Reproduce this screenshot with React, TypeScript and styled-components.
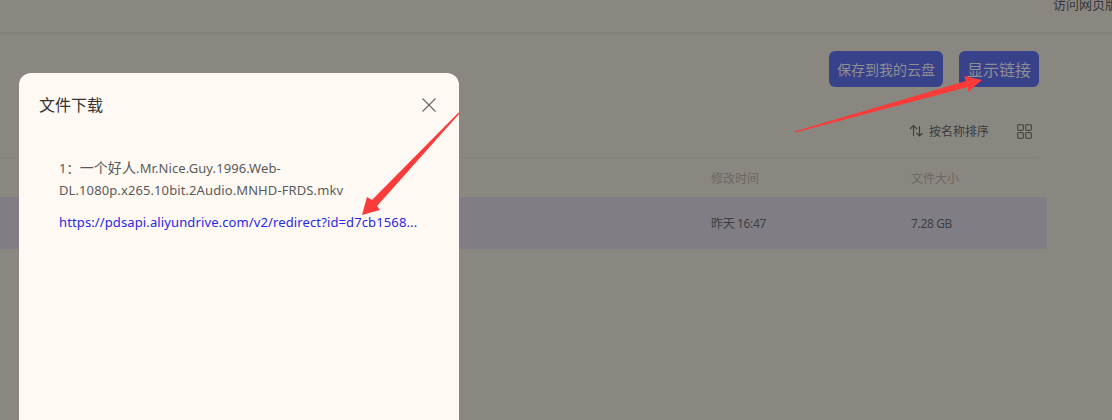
import React from "react";
import styled, { createGlobalStyle } from "styled-components";

const GlobalStyle = createGlobalStyle`
  html, body {
    margin: 0;
    padding: 0;
    background: #8a8780;
    overflow: hidden;
    font-family: "Noto Sans", "Noto Sans CJK SC", sans-serif;
  }
`;

const Page = styled.div`
  position: relative;
  width: 1112px;
  height: 420px;
  overflow: hidden;
  background: #8a8780;
`;

const TopBar = styled.div`
  height: 33px;
  box-sizing: border-box;
  border-bottom: 1px solid #84817a;
  box-shadow: 0 1px 3px rgba(100, 98, 92, 0.25);
  display: flex;
  justify-content: flex-end;
  overflow: hidden;
`;

const VisitLink = styled.span`
  flex: none;
  margin-right: -6px;
  margin-top: -5px;
  font-size: 13px;
  line-height: 18px;
  color: #36343a;
  white-space: nowrap;
`;

const Content = styled.div`
  display: flex;
  flex-direction: column;
  padding: 18px 65px 0 0;
`;

const Actions = styled.div`
  display: flex;
  justify-content: flex-end;
  gap: 16px;
  margin-right: 8px;
`;

const ActionButton = styled.button<{ $size: number }>`
  height: 36px;
  padding: 0 8px;
  border: 0;
  border-radius: 6px;
  background: #37428a;
  color: #8f8e93;
  font: inherit;
  font-size: ${(props) => props.$size}px;
  white-space: nowrap;
`;

const SortRow = styled.div`
  display: flex;
  align-items: center;
  justify-content: flex-end;
  height: 36px;
  margin-top: 26px;
  margin-right: 15px;
`;

const SortLabel = styled.span`
  margin-left: 5px;
  margin-right: 28px;
  font-size: 12px;
  color: #3b3a3a;
`;

const Divider = styled.div`
  height: 1px;
  margin-top: 8px;
  margin-right: 8px;
  background: #84817a;
`;

const TableRow = styled.div<{ $selected?: boolean }>`
  display: grid;
  grid-template-columns: 711px 200px 1fr;
  align-items: center;
  height: ${(props) => (props.$selected ? 52 : 39)}px;
  background: ${(props) => (props.$selected ? "#807e84" : "transparent")};
  color: ${(props) => (props.$selected ? "#3f3e41" : "#6b6865")};
  font-size: 12px;
  letter-spacing: ${(props) => (props.$selected ? "-0.35px" : "0")};
`;

const Cell = styled.span`
  white-space: nowrap;
`;

const Modal = styled.div`
  position: absolute;
  left: 19px;
  top: 73px;
  width: 440px;
  height: 360px;
  box-sizing: border-box;
  background: #fff9f3;
  border-radius: 12px;
  padding: 0 20px;
`;

const ModalHeader = styled.div`
  display: flex;
  align-items: center;
  justify-content: space-between;
  height: 63px;
  box-sizing: border-box;
`;

const ModalTitle = styled.h2`
  margin: 0;
  font-size: 16px;
  line-height: 22px;
  font-weight: 400;
  color: #343434;
`;

const CloseButton = styled.button`
  display: flex;
  padding: 0;
  margin-right: 2px;
  border: 0;
  background: none;
  color: #666;
`;

const ModalBody = styled.div`
  padding: 21px 20px 0;
`;

const FileName = styled.div`
  font-size: 13px;
  line-height: 22px;
  letter-spacing: 0.1px;
  color: #5a5a5a;
  word-break: break-word;
`;

const CjkName = styled.span`
  font-size: 14px;
`;

const FileLink = styled.a`
  display: block;
  margin-top: 10px;
  font-size: 13px;
  line-height: 22px;
  letter-spacing: 0.12px;
  color: #2727e6;
  text-decoration: none;
  white-space: nowrap;
`;

const ArrowLayer = styled.svg`
  position: absolute;
  left: 0;
  top: 0;
  pointer-events: none;
`;

export default function App() {
  return (
    <Page>
      <GlobalStyle />
      <TopBar>
        <VisitLink>访问网页版</VisitLink>
      </TopBar>
      <Content>
        <Actions>
          <ActionButton $size={14}>保存到我的云盘</ActionButton>
          <ActionButton $size={16}>显示链接</ActionButton>
        </Actions>
        <SortRow>
          <svg width="15" height="14" viewBox="0 0 15 14" fill="none" stroke="#3f3e3c" strokeWidth="1.1">
            <path d="M4.5 12V2M1 5l3.5-3.5L8 5" />
            <path d="M10.5 2v10M7.5 9l3 3 3-3" />
          </svg>
          <SortLabel>按名称排序</SortLabel>
          <svg width="15" height="15" viewBox="0 0 15 15" fill="none" stroke="#4a4844" strokeWidth="1.2">
            <rect x="0.6" y="0.6" width="5.8" height="5.8" rx="1.4" />
            <rect x="8.6" y="0.6" width="5.8" height="5.8" rx="1.4" />
            <rect x="0.6" y="8.6" width="5.8" height="5.8" rx="1.4" />
            <rect x="8.6" y="8.6" width="5.8" height="5.8" rx="1.4" />
          </svg>
        </SortRow>
        <Divider />
        <TableRow>
          <span />
          <Cell>修改时间</Cell>
          <Cell>文件大小</Cell>
        </TableRow>
        <TableRow $selected>
          <span />
          <Cell>昨天 16:47</Cell>
          <Cell>7.28 GB</Cell>
        </TableRow>
      </Content>
      <Modal>
        <ModalHeader>
          <ModalTitle>文件下载</ModalTitle>
          <CloseButton aria-label="关闭">
            <svg width="16" height="16" viewBox="0 0 16 16" fill="none" stroke="currentColor" strokeWidth="1.1">
              <path d="M1.5 1.5l13 13M14.5 1.5l-13 13" />
            </svg>
          </CloseButton>
        </ModalHeader>
        <ModalBody>
          <FileName>
            1：<CjkName>一个好人</CjkName>.Mr.Nice.Guy.1996.Web-DL.1080p.x265.10bit.2Audio.MNHD-FRDS.mkv
          </FileName>
          <FileLink href="#">https://pdsapi.aliyundrive.com/v2/redirect?id=d7cb1568...</FileLink>
        </ModalBody>
      </Modal>
      <ArrowLayer width="1112" height="420" viewBox="0 0 1112 420">
        <path d="M794.5 131.5L966 81L964 76L982 80L968 92L968 87L795.5 132.5Z" fill="#fb3a3a" />
        <path d="M458.5 112.5L372 200L367 197L362 215L380 210L377 206L459.5 113.5Z" fill="#fb3a3a" />
      </ArrowLayer>
    </Page>
  );
}
